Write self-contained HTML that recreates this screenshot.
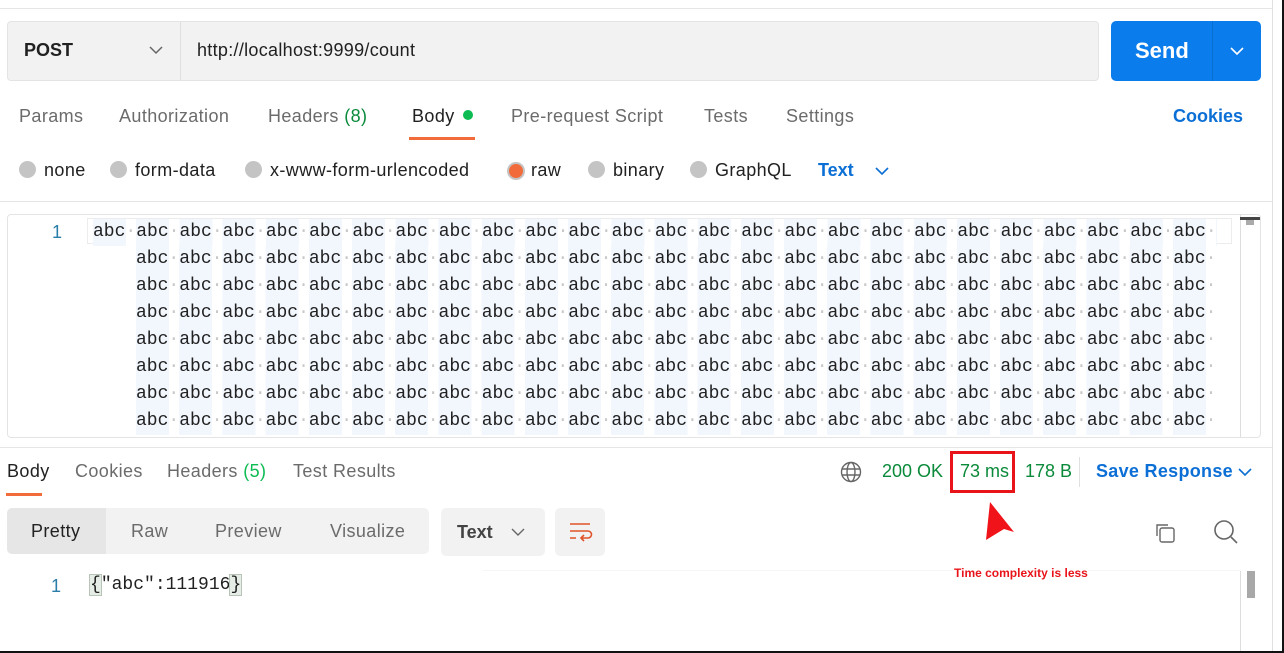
<!DOCTYPE html>
<html><head><meta charset="utf-8"><style>
*{margin:0;padding:0;box-sizing:border-box}
body{width:1284px;height:653px;overflow:hidden;background:#fff;font-family:"Liberation Sans",sans-serif;position:relative;color:#212121}
.a{position:absolute}
.tab{position:absolute;top:106px;font-size:18px;color:#6b6b6b;letter-spacing:0.4px}
.rad{position:absolute;top:160px;font-size:18px;color:#212121;letter-spacing:0.4px}
.rad b{display:inline-block;width:17px;height:17px;border-radius:50%;background:#c4c4c4;vertical-align:-2px;margin-right:8px}
.ed{position:absolute;font-family:"Liberation Mono",monospace;font-size:18px;line-height:27px;color:#212121;white-space:pre;
background:repeating-linear-gradient(90deg,#f2f6fd 0,#f2f6fd 33px,#fff 33px,#fff 43.2px)}
.ed i{font-style:normal;color:#c8c8c8}
.rt{position:absolute;top:461px;font-size:18px;color:#6b6b6b;letter-spacing:0.4px}
</style></head><body>
<div class="a" style="left:0;top:8px;width:1272px;height:1px;background:#e6e6e6"></div>
<div class="a" style="left:1272px;top:0;width:1px;height:653px;background:#e0e0e0"></div>
<div class="a" style="left:7px;top:21px;width:1092px;height:60px;background:#f2f2f2;border:1px solid #e4e4e4;border-radius:4px"></div>
<div class="a" style="left:180px;top:22px;width:1px;height:58px;background:#e0e0e0"></div>
<div class="a" style="left:24px;top:40px;font-size:18px;font-weight:bold;color:#212121">POST</div>
<svg class="a" style="left:149px;top:45px" width="14" height="10"><path d="M1 2l6 6 6-6" fill="none" stroke="#666" stroke-width="1.5"/></svg>
<div class="a" style="left:197px;top:40px;font-size:18px;color:#212121;letter-spacing:0.3px">http://localhost:9999/count</div>
<div class="a" style="left:1111px;top:21px;width:150px;height:60px;background:#0b7ceb;border-radius:5px"></div>
<div class="a" style="left:1212px;top:21px;width:1px;height:60px;background:#0a6fd3"></div>
<div class="a" style="left:1135px;top:38px;font-size:22px;font-weight:bold;color:#fff">Send</div>
<svg class="a" style="left:1229px;top:46px" width="16" height="10"><path d="M2 2l6 6 6-6" fill="none" stroke="#fff" stroke-width="1.6"/></svg>
<div class="tab" style="left:19px">Params</div>
<div class="tab" style="left:119px">Authorization</div>
<div class="tab" style="left:268px">Headers <span style="color:#0a8a3a">(8)</span></div>
<div class="tab" style="left:412px;color:#212121">Body <span style="display:inline-block;width:10px;height:10px;border-radius:50%;background:#0cbb52;vertical-align:2px;margin-left:3px"></span></div>
<div class="a" style="left:409px;top:137px;width:66px;height:3px;background:#f26b3a"></div>
<div class="tab" style="left:511px">Pre-request Script</div>
<div class="tab" style="left:704px">Tests</div>
<div class="tab" style="left:786px">Settings</div>
<div class="tab" style="left:1173px;color:#0b6fd6;font-weight:bold;letter-spacing:0">Cookies</div>
<div class="rad" style="left:19px"><b></b>none</div>
<div class="rad" style="left:110px"><b></b>form-data</div>
<div class="rad" style="left:245px"><b></b>x-www-form-urlencoded</div>
<div class="rad" style="left:508px"><b style="background:#f26b3a;box-shadow:0 0 0 2px #c4c4c4;width:14px;height:14px;margin-left:1px"></b>raw</div>
<div class="rad" style="left:588px"><b></b>binary</div>
<div class="rad" style="left:690px"><b></b>GraphQL</div>
<div class="rad" style="left:818px;color:#0b6fd6;font-weight:bold;letter-spacing:0">Text</div>
<svg class="a" style="left:875px;top:166px" width="14" height="10"><path d="M1 2l6 6 6-6" fill="none" stroke="#0b6fd6" stroke-width="1.6"/></svg>
<div class="a" style="left:0;top:201px;width:1272px;height:1px;background:#e6e6e6"></div>
<div class="a" style="left:7px;top:214px;width:1254px;height:224px;border:1px solid #e4e4e4;border-radius:4px;overflow:hidden">
<div class="a" style="left:1232px;top:0;width:1px;height:224px;background:#ddd"></div>
<div class="a" style="left:1232px;top:2px;width:20px;height:3px;background:#444"></div>
<div class="a" style="left:1238px;top:5px;width:8px;height:5px;background:#aaa"></div>
</div>
<div class="a" style="left:87px;top:218px;width:1145px;height:26px;border:1px solid #ececec"></div>
<div class="a" style="left:52px;top:219px;font-size:18px;color:#2a7da8;line-height:27px">1</div>
<div class="ed" style="left:93px;top:219px">abc<i>·</i>abc<i>·</i>abc<i>·</i>abc<i>·</i>abc<i>·</i>abc<i>·</i>abc<i>·</i>abc<i>·</i>abc<i>·</i>abc<i>·</i>abc<i>·</i>abc<i>·</i>abc<i>·</i>abc<i>·</i>abc<i>·</i>abc<i>·</i>abc<i>·</i>abc<i>·</i>abc<i>·</i>abc<i>·</i>abc<i>·</i>abc<i>·</i>abc<i>·</i>abc<i>·</i>abc<i>·</i>abc<i>·</i></div>
<div class="ed" style="left:136px;top:246px">abc<i>·</i>abc<i>·</i>abc<i>·</i>abc<i>·</i>abc<i>·</i>abc<i>·</i>abc<i>·</i>abc<i>·</i>abc<i>·</i>abc<i>·</i>abc<i>·</i>abc<i>·</i>abc<i>·</i>abc<i>·</i>abc<i>·</i>abc<i>·</i>abc<i>·</i>abc<i>·</i>abc<i>·</i>abc<i>·</i>abc<i>·</i>abc<i>·</i>abc<i>·</i>abc<i>·</i>abc<i>·</i>
abc<i>·</i>abc<i>·</i>abc<i>·</i>abc<i>·</i>abc<i>·</i>abc<i>·</i>abc<i>·</i>abc<i>·</i>abc<i>·</i>abc<i>·</i>abc<i>·</i>abc<i>·</i>abc<i>·</i>abc<i>·</i>abc<i>·</i>abc<i>·</i>abc<i>·</i>abc<i>·</i>abc<i>·</i>abc<i>·</i>abc<i>·</i>abc<i>·</i>abc<i>·</i>abc<i>·</i>abc<i>·</i>
abc<i>·</i>abc<i>·</i>abc<i>·</i>abc<i>·</i>abc<i>·</i>abc<i>·</i>abc<i>·</i>abc<i>·</i>abc<i>·</i>abc<i>·</i>abc<i>·</i>abc<i>·</i>abc<i>·</i>abc<i>·</i>abc<i>·</i>abc<i>·</i>abc<i>·</i>abc<i>·</i>abc<i>·</i>abc<i>·</i>abc<i>·</i>abc<i>·</i>abc<i>·</i>abc<i>·</i>abc<i>·</i>
abc<i>·</i>abc<i>·</i>abc<i>·</i>abc<i>·</i>abc<i>·</i>abc<i>·</i>abc<i>·</i>abc<i>·</i>abc<i>·</i>abc<i>·</i>abc<i>·</i>abc<i>·</i>abc<i>·</i>abc<i>·</i>abc<i>·</i>abc<i>·</i>abc<i>·</i>abc<i>·</i>abc<i>·</i>abc<i>·</i>abc<i>·</i>abc<i>·</i>abc<i>·</i>abc<i>·</i>abc<i>·</i>
abc<i>·</i>abc<i>·</i>abc<i>·</i>abc<i>·</i>abc<i>·</i>abc<i>·</i>abc<i>·</i>abc<i>·</i>abc<i>·</i>abc<i>·</i>abc<i>·</i>abc<i>·</i>abc<i>·</i>abc<i>·</i>abc<i>·</i>abc<i>·</i>abc<i>·</i>abc<i>·</i>abc<i>·</i>abc<i>·</i>abc<i>·</i>abc<i>·</i>abc<i>·</i>abc<i>·</i>abc<i>·</i>
abc<i>·</i>abc<i>·</i>abc<i>·</i>abc<i>·</i>abc<i>·</i>abc<i>·</i>abc<i>·</i>abc<i>·</i>abc<i>·</i>abc<i>·</i>abc<i>·</i>abc<i>·</i>abc<i>·</i>abc<i>·</i>abc<i>·</i>abc<i>·</i>abc<i>·</i>abc<i>·</i>abc<i>·</i>abc<i>·</i>abc<i>·</i>abc<i>·</i>abc<i>·</i>abc<i>·</i>abc<i>·</i>
abc<i>·</i>abc<i>·</i>abc<i>·</i>abc<i>·</i>abc<i>·</i>abc<i>·</i>abc<i>·</i>abc<i>·</i>abc<i>·</i>abc<i>·</i>abc<i>·</i>abc<i>·</i>abc<i>·</i>abc<i>·</i>abc<i>·</i>abc<i>·</i>abc<i>·</i>abc<i>·</i>abc<i>·</i>abc<i>·</i>abc<i>·</i>abc<i>·</i>abc<i>·</i>abc<i>·</i>abc<i>·</i></div>
<div class="a" style="left:0;top:447px;width:1272px;height:1px;background:#e6e6e6"></div>
<div class="rt" style="left:7px;color:#212121">Body</div>
<div class="a" style="left:6px;top:493px;width:36px;height:3px;background:#f26b3a"></div>
<div class="rt" style="left:75px">Cookies</div>
<div class="rt" style="left:167px">Headers <span style="color:#0cbb52">(5)</span></div>
<div class="rt" style="left:293px">Test Results</div>
<svg class="a" style="left:840px;top:461px" width="22" height="22" fill="none" stroke="#666" stroke-width="1.4"><circle cx="11" cy="11" r="9.5"/><ellipse cx="11" cy="11" rx="4" ry="9.5"/><path d="M2 8h18M2 14h18"/></svg>
<div class="rt" style="left:882px;color:#0a8a3a;letter-spacing:0">200 OK</div>
<div class="a" style="left:950px;top:451px;width:65px;height:42px;border:3px solid #e8141a"></div>
<div class="rt" style="left:960px;color:#0a8a3a;letter-spacing:0">73 ms</div>
<div class="rt" style="left:1025px;color:#0a8a3a;letter-spacing:0">178 B</div>
<div class="a" style="left:1079px;top:457px;width:1px;height:30px;background:#e0e0e0"></div>
<div class="rt" style="left:1096px;color:#0b6fd6;font-weight:bold;letter-spacing:0.3px">Save Response</div>
<svg class="a" style="left:1238px;top:467px" width="14" height="10"><path d="M1 2l6 6 6-6" fill="none" stroke="#0b6fd6" stroke-width="1.6"/></svg>
<svg class="a" style="left:984px;top:500px" width="34" height="42"><path d="M6 2 L30 32 L20 29 L2 40 Z" fill="#f0141a"/></svg>
<div class="a" style="left:483px;top:570px;width:757px;height:1px;background:#f6f6f6"></div>
<div class="a" style="left:954px;top:566px;font-size:12px;font-weight:bold;color:#e8141a;background:#fff;z-index:2">Time complexity is less</div>
<div class="a" style="left:7px;top:508px;width:422px;height:46px;background:#f2f2f2;border-radius:5px"></div>
<div class="a" style="left:7px;top:508px;width:99px;height:46px;background:#e6e6e6;border-radius:5px 0 0 5px"></div>
<div class="a" style="left:31px;top:521px;font-size:18px;color:#212121;letter-spacing:0.4px">Pretty</div>
<div class="a" style="left:131px;top:521px;font-size:18px;color:#6b6b6b;letter-spacing:0.4px">Raw</div>
<div class="a" style="left:215px;top:521px;font-size:18px;color:#6b6b6b;letter-spacing:0.4px">Preview</div>
<div class="a" style="left:330px;top:521px;font-size:18px;color:#6b6b6b;letter-spacing:0.4px">Visualize</div>
<div class="a" style="left:441px;top:508px;width:104px;height:48px;background:#f2f2f2;border-radius:5px"></div>
<div class="a" style="left:457px;top:522px;font-size:18px;font-weight:bold;color:#444">Text</div>
<svg class="a" style="left:511px;top:527px" width="14" height="10"><path d="M1 2l6 6 6-6" fill="none" stroke="#666" stroke-width="1.4"/></svg>
<div class="a" style="left:555px;top:508px;width:50px;height:48px;background:#f2f2f2;border-radius:5px"></div>
<svg class="a" style="left:568px;top:521px" width="26" height="22" fill="none" stroke="#e0542a" stroke-width="1.6"><path d="M2 3h20M2 10h18a3.5 3.5 0 0 1 0 7h-6M16 14l-3 3 3 3M2 17h6"/></svg>
<svg class="a" style="left:1152px;top:520px" width="26" height="26" fill="none" stroke="#666" stroke-width="1.4"><rect x="8" y="8" width="14" height="14" rx="2"/><path d="M5 16V5h11"/></svg>
<svg class="a" style="left:1212px;top:518px" width="28" height="28" fill="none" stroke="#666" stroke-width="1.6"><circle cx="12" cy="12" r="9"/><path d="M19 19l6 6"/></svg>
<div class="a" style="left:1240px;top:571px;width:1px;height:82px;background:#ddd"></div>
<div class="a" style="left:1247px;top:571px;width:8px;height:27px;background:#a8a8a8"></div>
<div class="a" style="left:51px;top:576px;font-size:18px;color:#2a7da8">1</div>
<div class="a" style="left:90px;top:575px;font-family:'Liberation Mono',monospace;font-size:18px;color:#212121"><span style="background:#e6ede6;outline:1px solid #b8c4b8">{</span>"abc":111916<span style="background:#e6ede6;outline:1px solid #b8c4b8">}</span></div>
<div class="a" style="left:0;top:651px;width:1284px;height:2px;background:#111"></div>
<div class="a" style="left:1282px;top:0;width:2px;height:653px;background:#111"></div>
</body></html>
